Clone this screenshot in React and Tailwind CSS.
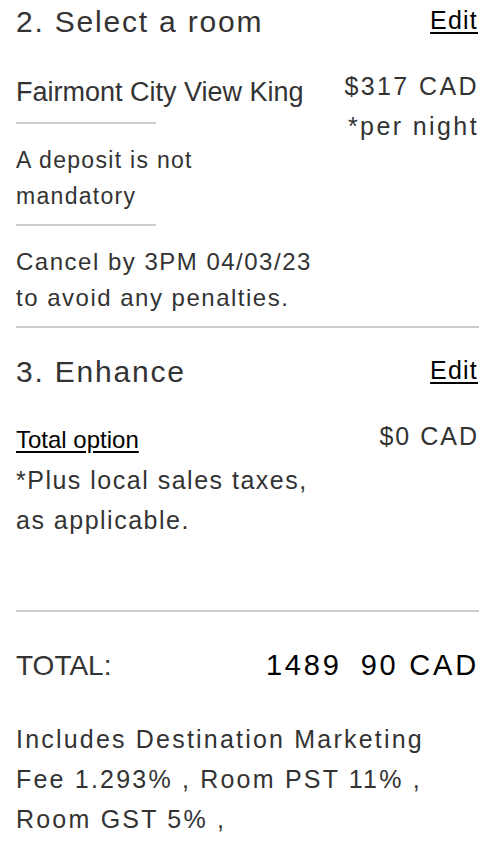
import React from 'react'

const Divider = ({ className = '' }) => <div className={`h-[2px] bg-[#cccccc] ${className}`} />

const SectionHeader = ({ title }) => (
  <div className="flex items-start justify-between">
    <h2 className="text-[30px] leading-[44px] tracking-[1.8px] text-[#333]">{title}</h2>
    <a href="#" className="mr-[1px] text-[25px] leading-[40px] tracking-[1.2px] text-black underline underline-offset-[3px]">
      Edit
    </a>
  </div>
)

const App = () => {
  return (
    <div className="min-h-screen bg-white pl-4 pr-[17px] font-['Liberation_Sans',Arial,sans-serif] text-[#333]">
      {/* 2. Select a room */}
      <SectionHeader title="2. Select a room" />

      <div className="mt-[26px] flex items-start justify-between">
        <div className="w-[320px] pt-[4px]">
          <p className="text-[27px] leading-[36px]">Fairmont City View King</p>
          <Divider className="mt-[12px] w-[140px]" />
          <p className="mt-[18px] w-[200px] text-[23px] leading-[36px] tracking-[1.3px]">
            A deposit is not mandatory
          </p>
          <Divider className="mt-[10px] w-[140px]" />
          <p className="mt-[18px] w-[315px] text-[24px] leading-[36px] tracking-[1.5px]">
            Cancel by 3PM 04/03/23 to avoid any penalties.
          </p>
        </div>
        <div className="-mt-[4px] text-right text-[25px] leading-[40px] tracking-[2.4px]">
          <p>$317 CAD</p>
          <p>*per night</p>
        </div>
      </div>

      <Divider className="mt-[10px]" />

      {/* 3. Enhance */}
      <div className="mt-[22px]">
        <SectionHeader title="3. Enhance" />
      </div>

      <div className="mt-[26px] flex items-start justify-between">
        <div className="w-[320px]">
          <a href="#" className="block text-[24px] leading-[40px] text-black underline underline-offset-[3px]">
            Total option
          </a>
          <p className="text-[25px] leading-[40px] tracking-[1.5px]">*Plus local sales taxes, as applicable.</p>
        </div>
        <p className="-mt-[4px] text-[25px] leading-[40px] tracking-[2px]">$0 CAD</p>
      </div>

      <Divider className="mt-[70px]" />

      {/* Total */}
      <div className="mt-[31px] flex items-baseline justify-between">
        <p className="text-[28px] leading-[44px]">TOTAL:</p>
        <p className="text-[29px] leading-[44px] tracking-[2.8px] text-black">
          1489<span className="ml-[19px]">90 CAD</span>
        </p>
      </div>

      <p className="mt-[31px] max-w-[445px] text-[25px] leading-[40px] tracking-[2.2px]">
        Includes Destination Marketing Fee 1.293% , Room PST 11% , Room GST 5% ,
      </p>
    </div>
  )
}

export default App
